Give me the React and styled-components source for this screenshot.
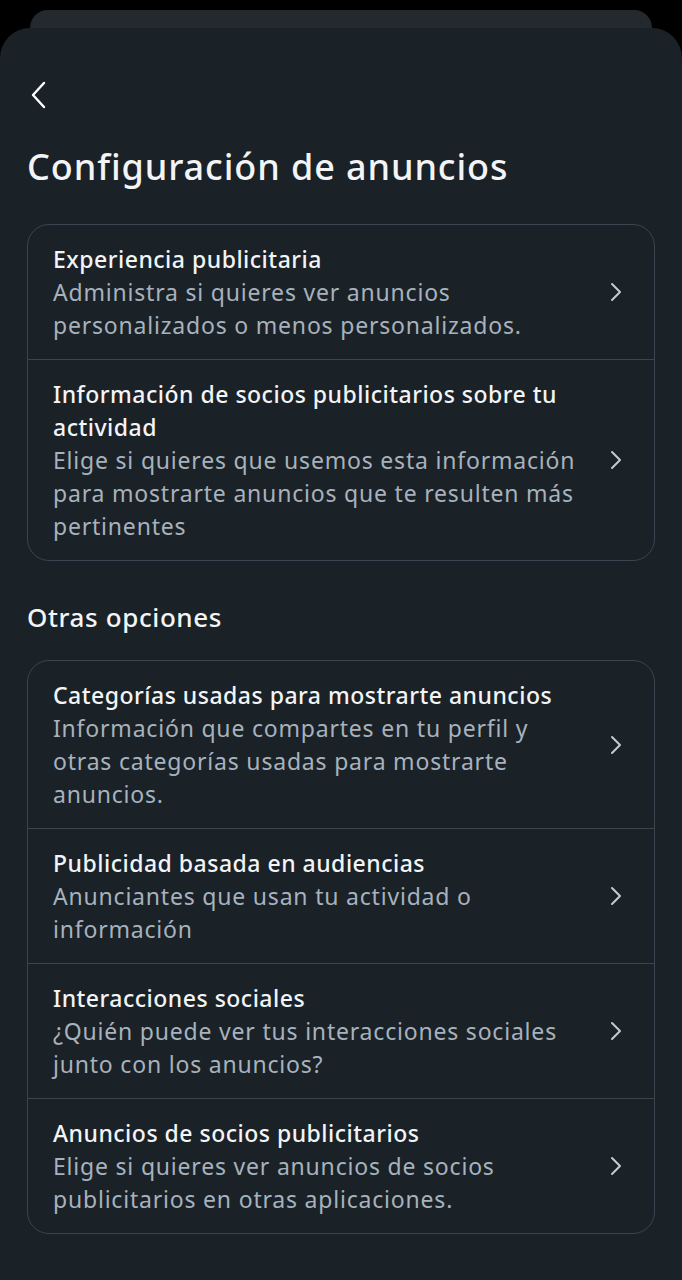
import React from "react";
import styled, { createGlobalStyle } from "styled-components";

const Global = createGlobalStyle`
  html, body { margin: 0; padding: 0; background: #000; }
  body { font-family: "Noto Sans", Roboto, sans-serif; -webkit-font-smoothing: antialiased; }
`;

const Screen = styled.div`
  width: 682px;
  height: 1280px;
  background: #000;
  overflow: hidden;
  display: flex;
  flex-direction: column;
  align-items: center;
  padding-top: 10px;
  box-sizing: border-box;
`;

const BackSheet = styled.div`
  width: 622px;
  height: 18px;
  flex: none;
  background: #24292e;
  border-radius: 22px 22px 0 0;
`;

const Sheet = styled.div`
  flex: 1;
  align-self: stretch;
  background: #1a2127;
  border-radius: 30px 30px 0 0;
  padding: 52px 27px 0 27px;
  display: flex;
  flex-direction: column;
`;

const BackButton = styled.button`
  background: none;
  border: none;
  padding: 0;
  margin: 0 0 0 3px;
  width: 20px;
  height: 30px;
  display: flex;
  align-items: center;
  cursor: pointer;
`;

const Title = styled.h1`
  margin: 32px 0 0 0;
  font-size: 36px;
  line-height: 50px;
  font-weight: 500;
  color: #f2f4f6;
  letter-spacing: 0.9px;
`;

const SectionTitle = styled.h2`
  margin: 36px 0 0 0;
  font-size: 26px;
  line-height: 40px;
  font-weight: 500;
  color: #f2f4f6;
  letter-spacing: 0.6px;
`;

const Card = styled.div`
  margin-top: ${(p) => p.$top}px;
  border: 1px solid #3a4550;
  border-radius: 22px;
  overflow: hidden;
`;

const Row = styled.div`
  display: flex;
  align-items: center;
  gap: 16px;
  padding: 17.5px 30px 17.5px 25px;
  & + & { border-top: 1px solid #3a4550; }
`;

const RowText = styled.div`
  flex: 1;
  max-width: 540px;
  display: flex;
  flex-direction: column;
`;

const RowTitle = styled.div`
  font-size: 23px;
  line-height: 33px;
  font-weight: 500;
  color: #f2f4f6;
  letter-spacing: 0.5px;
`;

const RowSub = styled.div`
  font-size: 23px;
  line-height: 33px;
  font-weight: 400;
  color: #a7b2bd;
  letter-spacing: 0.8px;
`;

const Chevron = () => (
  <svg width="14" height="20" viewBox="0 0 14 20" fill="none">
    <path d="M3 2 L11 10 L3 18" stroke="#c3cbd3" strokeWidth="2" strokeLinecap="round" strokeLinejoin="round" />
  </svg>
);

const BackIcon = () => (
  <svg width="16" height="28" viewBox="0 0 16 28" fill="none">
    <path d="M14 2 L3 14 L14 26" stroke="#ffffff" strokeWidth="2.4" strokeLinecap="round" strokeLinejoin="round" />
  </svg>
);

const Item = ({ title, sub }) => (
  <Row>
    <RowText>
      <RowTitle>{title}</RowTitle>
      <RowSub>{sub}</RowSub>
    </RowText>
    <Chevron />
  </Row>
);

export default function App() {
  return (
    <>
      <Global />
      <Screen>
        <BackSheet />
        <Sheet>
          <BackButton aria-label="Atrás">
            <BackIcon />
          </BackButton>
          <Title>Configuración de anuncios</Title>
          <Card $top={32}>
            <Item
              title="Experiencia publicitaria"
              sub="Administra si quieres ver anuncios personalizados o menos personalizados."
            />
            <Item
              title="Información de socios publicitarios sobre tu actividad"
              sub="Elige si quieres que usemos esta información para mostrarte anuncios que te resulten más pertinentes"
            />
          </Card>
          <SectionTitle>Otras opciones</SectionTitle>
          <Card $top={23}>
            <Item
              title="Categorías usadas para mostrarte anuncios"
              sub="Información que compartes en tu perfil y otras categorías usadas para mostrarte anuncios."
            />
            <Item
              title="Publicidad basada en audiencias"
              sub="Anunciantes que usan tu actividad o información"
            />
            <Item
              title="Interacciones sociales"
              sub="¿Quién puede ver tus interacciones sociales junto con los anuncios?"
            />
            <Item
              title="Anuncios de socios publicitarios"
              sub="Elige si quieres ver anuncios de socios publicitarios en otras aplicaciones."
            />
          </Card>
        </Sheet>
      </Screen>
    </>
  );
}
